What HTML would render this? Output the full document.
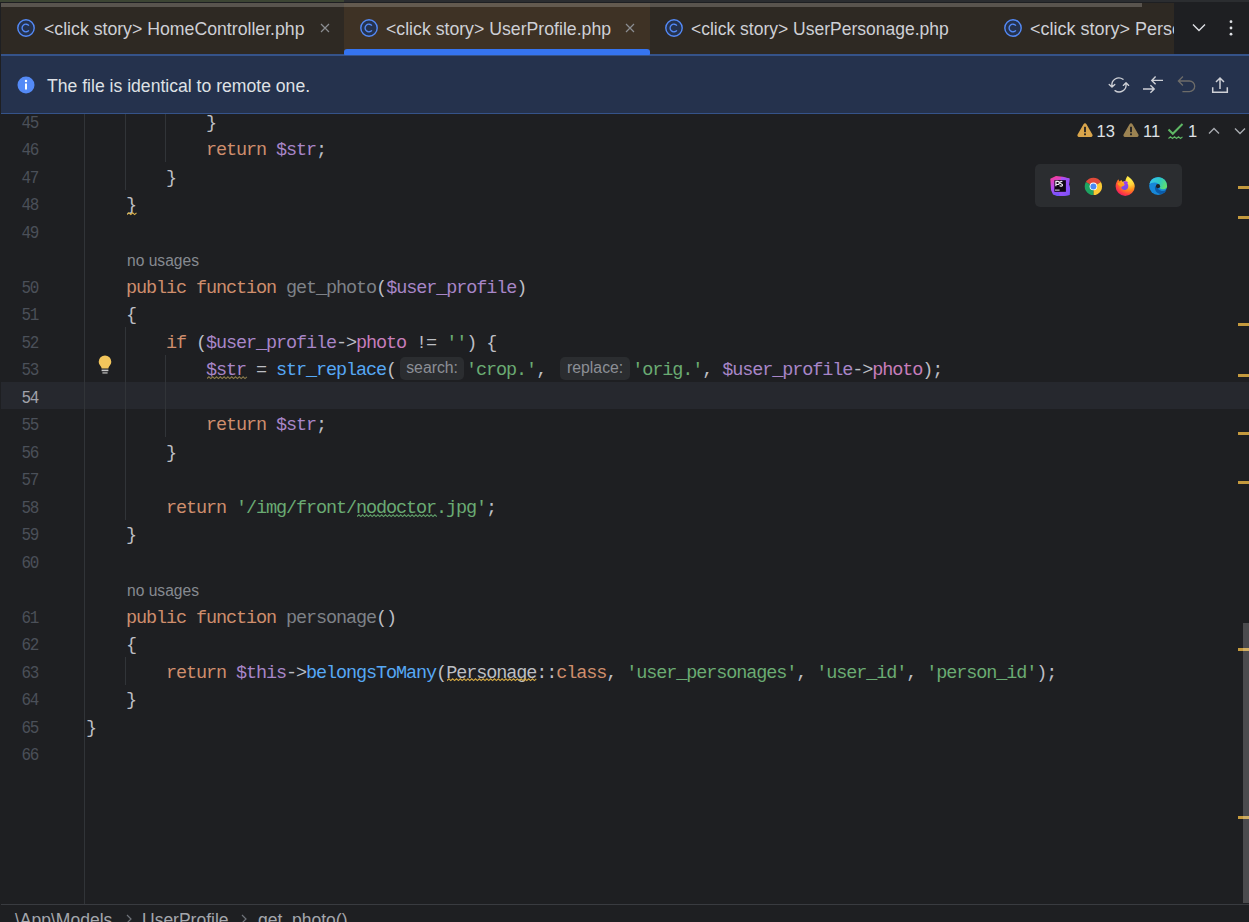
<!DOCTYPE html>
<html><head><meta charset="utf-8"><style>
*{margin:0;padding:0;box-sizing:border-box}
html,body{width:1249px;height:922px;overflow:hidden;background:#1e1f22;position:relative}
body{font-family:"Liberation Sans",sans-serif}
.abs{position:absolute}
/* top strip */
#strip1{left:0;top:0;width:344px;height:2px;background:#3c4433}
#strip2{left:344px;top:0;width:905px;height:2px;background:#2b2d30}
#tabbar{left:1px;top:3px;width:1173px;height:51px;background:#2e2923}
#tabright{left:1174px;top:3px;width:75px;height:51px;background:#1e1f22}
#acttab{left:344px;top:3px;width:306px;height:51px;background:#3e3225}
#thumbTop{left:1px;top:3px;width:1141px;height:4px;background:rgba(165,160,155,0.36)}
#actline{left:344px;top:49px;width:306px;height:6px;background:#3574f0;border-radius:3px 3px 1px 1px;z-index:2}
.tab{position:absolute;top:3px;height:51px;white-space:nowrap;overflow:hidden}
.tabtxt{position:absolute;top:18px;font-size:17.7px;line-height:22px;color:#ced0d6;white-space:pre}
.cicon{position:absolute;top:19px;width:18px;height:18px}
.close{position:absolute;top:23px;width:10px;height:10px}
/* banner */
#banner{left:1px;top:54px;width:1248px;height:60px;background:#25324d;border-top:2px solid #35538a;border-bottom:1px solid #35538a}
#bantxt{position:absolute;left:47px;top:75px;font-size:17.6px;line-height:22px;color:#dfe1e5;white-space:pre}
/* editor */
#editor{left:0;top:114px;width:1249px;height:790px;overflow:hidden;background:#1e1f22}
.curline{position:absolute;left:1px;width:1248px;height:27px;background:#26282e}
.ln{position:absolute;left:0;width:38px;text-align:right;font-family:"Liberation Mono",monospace;font-size:18.5px;letter-spacing:-1.5px;line-height:27.5px;color:#4b5059;padding-top:2.5px;transform:scaleX(0.86);transform-origin:right center}
.ln.cur{color:#a1a3ab}
.cl{position:absolute;left:86px;white-space:pre;font-family:"Liberation Mono",monospace;font-size:18.5px;letter-spacing:-1.1px;line-height:27.5px;color:#bcbec4;padding-top:2.5px}
.inl{position:absolute;left:127px;font-size:15.6px;line-height:27.5px;color:#868a91;padding-top:2px;white-space:pre}
.k{color:#cf8e6d}.d{color:#bcbec4}.v{color:#a886c8}.p{color:#c77dbb}.s{color:#6aab73}.f{color:#56a8f5}.u{color:#7f8288}
.dw{color:#bcbec4;text-decoration:underline wavy #b59a3a;text-decoration-thickness:1px;text-underline-offset:3px}
.vw{color:#a98bd8;text-decoration:underline wavy #b59a3a;text-decoration-thickness:1px;text-underline-offset:3px}
.sw{color:#6aab73;text-decoration:underline wavy #6f8c5a;text-decoration-thickness:1px;text-underline-offset:3px}
.dw2{color:#bcbec4;text-decoration:underline wavy #b59a3a;text-decoration-thickness:1px;text-underline-offset:3px}
.hint{display:inline-block;letter-spacing:0;vertical-align:top;margin-top:-0.5px;height:23px;line-height:22px;background:#2b2d30;border-radius:5px;font-family:"Liberation Sans",sans-serif;font-size:15.8px;color:#8c8f96;text-align:center}
.g{position:absolute;width:1px;background:#313438}
#gutline{left:84px;top:114px;width:1px;height:790px;background:#313438}
.mk{position:absolute;left:1238px;width:11px;height:3px;background:#c59a3e}
#sthumb{left:1243px;top:623px;width:6px;height:280px;background:rgba(255,255,255,0.2)}
/* status bar */
#crumbline{left:1px;top:904px;width:1248px;height:1px;background:#393b40}
.crumb{position:absolute;top:909px;font-size:17.5px;line-height:22px;color:#a4a6ac;white-space:pre}
#popup{left:1035px;top:164px;width:147px;height:43px;background:#2b2d30;border-radius:5px}
.wtxt{position:absolute;top:120px;font-size:16.5px;line-height:22px;color:#dfe1e5}
</style></head><body>
<div id="strip1" class="abs"></div>
<div id="strip2" class="abs"></div>
<div id="tabbar" class="abs"></div>
<div id="tabright" class="abs"></div>
<div id="acttab" class="abs"></div>
<div id="thumbTop" class="abs"></div>
<div id="actline" class="abs"></div>

<!-- tab 1 -->
<svg class="cicon" style="left:17px" viewBox="0 0 18 18"><circle cx="9" cy="9" r="8.2" fill="#25324d" stroke="#548af7" stroke-width="1.4"/><path d="M11.9 6.7 A3.8 3.8 0 1 0 11.9 11.3" fill="none" stroke="#548af7" stroke-width="1.35"/></svg>
<div class="tabtxt" style="left:44px">&lt;click story&gt; HomeController.php</div>
<svg class="close" style="left:320px" viewBox="0 0 10 10"><path d="M1 1L9 9M9 1L1 9" stroke="#8b8d91" stroke-width="1.2"/></svg>
<!-- tab 2 -->
<svg class="cicon" style="left:360px" viewBox="0 0 18 18"><circle cx="9" cy="9" r="8.2" fill="#25324d" stroke="#548af7" stroke-width="1.4"/><path d="M11.9 6.7 A3.8 3.8 0 1 0 11.9 11.3" fill="none" stroke="#548af7" stroke-width="1.35"/></svg>
<div class="tabtxt" style="left:386px">&lt;click story&gt; UserProfile.php</div>
<svg class="close" style="left:625px" viewBox="0 0 10 10"><path d="M1 1L9 9M9 1L1 9" stroke="#8b8d91" stroke-width="1.2"/></svg>
<!-- tab 3 -->
<svg class="cicon" style="left:664.5px" viewBox="0 0 18 18"><circle cx="9" cy="9" r="8.2" fill="#25324d" stroke="#548af7" stroke-width="1.4"/><path d="M11.9 6.7 A3.8 3.8 0 1 0 11.9 11.3" fill="none" stroke="#548af7" stroke-width="1.35"/></svg>
<div class="tabtxt" style="left:691px;font-size:17.5px">&lt;click story&gt; UserPersonage.php</div>
<!-- tab 4 -->
<svg class="cicon" style="left:1004px" viewBox="0 0 18 18"><circle cx="9" cy="9" r="8.2" fill="#25324d" stroke="#548af7" stroke-width="1.4"/><path d="M11.9 6.7 A3.8 3.8 0 1 0 11.9 11.3" fill="none" stroke="#548af7" stroke-width="1.35"/></svg>
<div class="abs" style="left:1020px;top:3px;width:154px;height:51px;overflow:hidden"><div class="tabtxt" style="left:10px;top:15px;font-size:18px">&lt;click story&gt; PersonageController.php</div></div>
<!-- tab bar right icons -->
<svg class="abs" style="left:1190px;top:20px" width="18" height="16" viewBox="0 0 18 16"><path d="M3 4.5L9 10.5L15 4.5" fill="none" stroke="#dfe1e5" stroke-width="1.4"/></svg>
<svg class="abs" style="left:1227px;top:17px" width="8" height="22" viewBox="0 0 8 22"><circle cx="4" cy="4.7" r="1.4" fill="#dfe1e5"/><circle cx="4" cy="11" r="1.4" fill="#dfe1e5"/><circle cx="4" cy="17.2" r="1.4" fill="#dfe1e5"/></svg>

<!-- banner -->
<div id="banner" class="abs"></div>
<svg class="abs" style="left:17px;top:76px" width="18" height="18" viewBox="0 0 18 18"><circle cx="9" cy="9" r="8.5" fill="#548af7"/><rect x="8" y="7.5" width="2" height="6" fill="#fff"/><circle cx="9" cy="5" r="1.2" fill="#fff"/></svg>
<div id="bantxt">The file is identical to remote one.</div>
<svg class="abs" style="left:1107px;top:73px" width="24" height="24" viewBox="0 0 24 24"><path d="M16 6.3A7 7 0 0 0 5 13.2M2.2 11.4L5 14.1L7.8 11.4" fill="none" stroke="#ced0d6" stroke-width="1.35" stroke-linecap="round" stroke-linejoin="round"/><path d="M8 17.6A7 7 0 0 0 19 10.8M16.3 12.4L19 9.8L21.7 12.4" fill="none" stroke="#ced0d6" stroke-width="1.35" stroke-linecap="round" stroke-linejoin="round"/></svg>
<svg class="abs" style="left:1141px;top:73px" width="24" height="24" viewBox="0 0 24 24"><path d="M11 7.4H22M14.6 3.6L10.8 7.4L14.6 11.2" fill="none" stroke="#ced0d6" stroke-width="1.4"/><path d="M2 16H13M9.4 12.2L13.2 16L9.4 19.8" fill="none" stroke="#ced0d6" stroke-width="1.4"/></svg>
<svg class="abs" style="left:1175px;top:73px" width="24" height="24" viewBox="0 0 24 24"><path d="M3.4 8H14.4A5.3 5.3 0 0 1 14.4 18.6H7.4M7.9 3.5L3.4 8L7.9 12.5" fill="none" stroke="#6d6c69" stroke-width="1.3"/></svg>
<svg class="abs" style="left:1208px;top:73px" width="24" height="24" viewBox="0 0 24 24"><path d="M12 5V16M8 9L12 5L16 9" fill="none" stroke="#ced0d6" stroke-width="1.5"/><path d="M4.7 14.2V19.3H19.3V14.2" fill="none" stroke="#ced0d6" stroke-width="1.5"/></svg>

<!-- editor -->
<div id="editor" class="abs">
<div style="position:absolute;left:0;top:-114px;width:1249px;height:922px">
<div class="curline" style="top:382.0px"></div>
<div class="g" style="left:125px;top:114px;height:75.5px"></div><div class="g" style="left:165px;top:114px;height:48.0px"></div><div class="g" style="left:125px;top:327.0px;height:192.5px"></div><div class="g" style="left:165px;top:354.5px;height:82.5px"></div><div class="g" style="left:125px;top:657.0px;height:27.5px"></div>
<div id="gutline" class="abs"></div>
<div class="ln" style="top:107.0px">45</div>
<div class="ln" style="top:134.5px">46</div>
<div class="ln" style="top:162.0px">47</div>
<div class="ln" style="top:189.5px">48</div>
<div class="ln" style="top:217.0px">49</div>
<div class="ln" style="top:272.0px">50</div>
<div class="ln" style="top:299.5px">51</div>
<div class="ln" style="top:327.0px">52</div>
<div class="ln" style="top:354.5px">53</div>
<div class="ln cur" style="top:382.0px">54</div>
<div class="ln" style="top:409.5px">55</div>
<div class="ln" style="top:437.0px">56</div>
<div class="ln" style="top:464.5px">57</div>
<div class="ln" style="top:492.0px">58</div>
<div class="ln" style="top:519.5px">59</div>
<div class="ln" style="top:547.0px">60</div>
<div class="ln" style="top:602.0px">61</div>
<div class="ln" style="top:629.5px">62</div>
<div class="ln" style="top:657.0px">63</div>
<div class="ln" style="top:684.5px">64</div>
<div class="ln" style="top:712.0px">65</div>
<div class="ln" style="top:739.5px">66</div>
<div class="cl" style="top:107.0px"><span class="d">            }</span></div>
<div class="cl" style="top:134.5px"><span class="d">            </span><span class="k">return</span><span class="d"> </span><span class="v">$str</span><span class="d">;</span></div>
<div class="cl" style="top:162.0px"><span class="d">        }</span></div>
<div class="cl" style="top:189.5px"><span class="d">    </span><span class="d">}</span></div>
<div class="cl" style="top:217.0px"></div>
<div class="inl" style="top:244.5px">no usages</div>
<div class="cl" style="top:272.0px"><span class="d">    </span><span class="k">public</span><span class="d"> </span><span class="k">function</span><span class="d"> </span><span class="u">get_photo</span><span class="d">(</span><span class="v">$user_profile</span><span class="d">)</span></div>
<div class="cl" style="top:299.5px"><span class="d">    {</span></div>
<div class="cl" style="top:327.0px"><span class="d">        </span><span class="k">if</span><span class="d"> (</span><span class="v">$user_profile</span><span class="d">-&gt;</span><span class="p">photo</span><span class="d"> != </span><span class="s">''</span><span class="d">) {</span></div>
<div class="cl" style="top:354.5px"><span class="d">            </span><span class="v">$str</span><span class="d"> = </span><span class="f">str_replace</span><span class="d">(</span><span class="hint" style="width:64px;margin-left:4px;margin-right:2px">search:</span><span class="s">'crop.'</span><span class="d">, </span><span class="hint" style="width:70px;margin-left:4px;margin-right:2px">replace:</span><span class="s">'orig.'</span><span class="d">, </span><span class="v">$user_profile</span><span class="d">-&gt;</span><span class="p">photo</span><span class="d">);</span></div>
<div class="cl" style="top:382.0px"></div>
<div class="cl" style="top:409.5px"><span class="d">            </span><span class="k">return</span><span class="d"> </span><span class="v">$str</span><span class="d">;</span></div>
<div class="cl" style="top:437.0px"><span class="d">        }</span></div>
<div class="cl" style="top:464.5px"></div>
<div class="cl" style="top:492.0px"><span class="d">        </span><span class="k">return</span><span class="d"> </span><span class="s">'/img/front/</span><span class="s">nodoctor</span><span class="s">.jpg'</span><span class="d">;</span></div>
<div class="cl" style="top:519.5px"><span class="d">    }</span></div>
<div class="cl" style="top:547.0px"></div>
<div class="inl" style="top:574.5px">no usages</div>
<div class="cl" style="top:602.0px"><span class="d">    </span><span class="k">public</span><span class="d"> </span><span class="k">function</span><span class="d"> </span><span class="u">personage</span><span class="d">()</span></div>
<div class="cl" style="top:629.5px"><span class="d">    {</span></div>
<div class="cl" style="top:657.0px"><span class="d">        </span><span class="k">return</span><span class="d"> </span><span class="v">$this</span><span class="d">-&gt;</span><span class="f">belongsToMany</span><span class="d">(</span><span class="d">Personage</span><span class="d">::</span><span class="k">class</span><span class="d">, </span><span class="s">'user_personages'</span><span class="d">, </span><span class="s">'user_id'</span><span class="d">, </span><span class="s">'person_id'</span><span class="d">);</span></div>
<div class="cl" style="top:684.5px"><span class="d">    }</span></div>
<div class="cl" style="top:712.0px"><span class="d">}</span></div>
<div class="cl" style="top:739.5px"></div>
<!-- lightbulb -->
<svg class="abs" style="left:96px;top:354px" width="18" height="22" viewBox="0 0 18 22"><path d="M9 1.5A6.3 6.3 0 0 0 2.7 7.8C2.7 10.3 4.4 11.6 5.3 13.2L5.6 14.6H12.4L12.7 13.2C13.6 11.6 15.3 10.3 15.3 7.8A6.3 6.3 0 0 0 9 1.5Z" fill="#f2c55c"/><rect x="5.6" y="15.6" width="6.8" height="1.6" fill="#c9c9c9"/><rect x="6.4" y="18.1" width="5.2" height="1.6" fill="#9a9a9a"/></svg>
<!-- warnings -->
<svg class="abs" style="left:1076px;top:122px" width="18" height="16" viewBox="0 0 18 16"><path d="M9 1.2C8.3 1.2 7.9 1.6 7.5 2.3L1.6 12.6C1 13.7 1.6 15 2.9 15H15.1C16.4 15 17 13.7 16.4 12.6L10.5 2.3C10.1 1.6 9.7 1.2 9 1.2Z" fill="#d9a54b"/><rect x="8.1" y="4.8" width="1.8" height="5.4" fill="#1e1f22"/><rect x="8.1" y="11.4" width="1.8" height="1.8" fill="#1e1f22"/></svg>
<div class="wtxt" style="left:1096.5px">13</div>
<svg class="abs" style="left:1122px;top:122px" width="18" height="16" viewBox="0 0 18 16"><path d="M9 1.2C8.3 1.2 7.9 1.6 7.5 2.3L1.6 12.6C1 13.7 1.6 15 2.9 15H15.1C16.4 15 17 13.7 16.4 12.6L10.5 2.3C10.1 1.6 9.7 1.2 9 1.2Z" fill="#9c8352"/><rect x="8.1" y="4.8" width="1.8" height="5.4" fill="#1e1f22"/><rect x="8.1" y="11.4" width="1.8" height="1.8" fill="#1e1f22"/></svg>
<div class="wtxt" style="left:1143px">11</div>
<svg class="abs" style="left:1166px;top:121px" width="19" height="20" viewBox="0 0 19 20"><path d="M2.5 8.5L6.8 12.8L16.5 3" fill="none" stroke="#5fb865" stroke-width="2"/><path d="M2.5 17.5L4.5 15.8L6.5 17.5L8.5 15.8L10.5 17.5L12.5 15.8L14.5 17.5L16.5 15.8" fill="none" stroke="#5fb865" stroke-width="1.1"/></svg>
<div class="wtxt" style="left:1188px">1</div>
<svg class="abs" style="left:1207px;top:124px" width="14" height="12" viewBox="0 0 14 12"><path d="M2 9.5L7 4.5L12 9.5" fill="none" stroke="#a8abb0" stroke-width="1.4"/></svg>
<svg class="abs" style="left:1233px;top:124px" width="14" height="12" viewBox="0 0 14 12"><path d="M2 4.5L7 9.5L12 4.5" fill="none" stroke="#a8abb0" stroke-width="1.4"/></svg>
<!-- popup -->
<div id="popup" class="abs"></div>
<!-- PS -->
<svg class="abs" style="left:1050px;top:176px" width="20" height="20" viewBox="0 0 20 20"><defs><linearGradient id="psg" x1="0" y1="0" x2="0.35" y2="1"><stop offset="0" stop-color="#ff3a90"/><stop offset="0.55" stop-color="#b64cf0"/><stop offset="1" stop-color="#6c55ff"/></linearGradient><linearGradient id="psg2" x1="0" y1="0" x2="1" y2="1"><stop offset="0" stop-color="#b24df6"/><stop offset="1" stop-color="#7a52fa"/></linearGradient></defs><path d="M0.3 2.8L6 0L13 0.8L19.5 2.5L19 8.5L20 13L19.5 19L13.5 20L7 20L3 18.5L1 14Z" fill="url(#psg)"/><path d="M11 1L19.5 2.5L19 8.5L20 13L19.5 19L13.5 20L9 19.5Z" fill="url(#psg2)"/><rect x="4.4" y="4.2" width="11.5" height="11.6" fill="#0d0612"/><path d="M5.9 10.2V5.4H7.8A1.55 1.55 0 0 1 7.8 8.5H5.9" fill="none" stroke="#f4eef8" stroke-width="1.2"/><path d="M12.3 5.9C11.7 5.3 9.8 5.2 9.8 6.6C9.8 7.9 12.5 7.5 12.5 9C12.5 10.4 10.4 10.5 9.6 9.7" fill="none" stroke="#f4eef8" stroke-width="1.2"/><rect x="5" y="13.6" width="4.6" height="1" fill="#e8e0ee"/></svg>
<!-- Chrome -->
<svg class="abs" style="left:1084px;top:177px" width="19" height="19" viewBox="0 0 19 19"><path d="M9.4 9.4L1.87 5.05A8.7 8.7 0 0 1 16.93 5.05Z" fill="#e04a3a"/><path d="M9.4 9.4L16.93 5.05A8.7 8.7 0 0 1 9.4 18.1Z" fill="#fcc934"/><path d="M9.4 9.4L9.4 18.1A8.7 8.7 0 0 1 1.87 5.05Z" fill="#1ea362"/><circle cx="9.4" cy="9.4" r="3.8" fill="#fff"/><circle cx="9.4" cy="9.4" r="3" fill="#4a8af4"/></svg>
<!-- Firefox -->
<svg class="abs" style="left:1113px;top:173px" width="24" height="24" viewBox="0 0 24 24"><defs><radialGradient id="ffg" cx="0.72" cy="0.18" r="0.95"><stop offset="0" stop-color="#fff44f"/><stop offset="0.3" stop-color="#ffd23a"/><stop offset="0.55" stop-color="#ff8a1a"/><stop offset="0.78" stop-color="#ff4040"/><stop offset="1" stop-color="#e8106e"/></radialGradient><linearGradient id="ffp" x1="0" y1="0" x2="0" y2="1"><stop offset="0" stop-color="#a73cf0"/><stop offset="1" stop-color="#6a4ee8"/></linearGradient></defs><path d="M14.6 3C17 5 21.8 8.5 21.8 13.3A9.6 9.6 0 0 1 2.6 13.3C2.6 10.5 3.8 8 5.3 6.2L6.5 8.4L8.3 7.1L9.8 8.9C10.5 8.2 11.5 7.9 12.4 8C12.8 6 13.5 4.2 14.6 3Z" fill="url(#ffg)"/><path d="M10.5 8.4C12.5 7.8 14.5 8.3 15 9.5C14.2 10 14.2 10.5 14.8 11C15.8 12.5 15.5 15.8 13 16.7C10.8 17.4 8.5 16.3 8.2 14.2C9.5 13.5 11 12.8 11.6 11.8C11 10.5 10.5 9.5 10.5 8.4Z" fill="url(#ffp)"/><path d="M4.2 10.2C6.5 9.6 9.5 10.2 11.8 11.6C10.3 12.3 9 12.8 8.3 13.6C6.8 13.2 5.2 12.2 4.2 10.2Z" fill="#ff9e1a"/></svg>
<!-- Edge -->
<svg class="abs" style="left:1146px;top:174px" width="24" height="24" viewBox="0 0 24 24"><defs><linearGradient id="edg2" x1="0" y1="0.3" x2="1" y2="0.6"><stop offset="0" stop-color="#38c4f0"/><stop offset="0.55" stop-color="#2ec8c0"/><stop offset="1" stop-color="#62e26a"/></linearGradient></defs><circle cx="12.1" cy="11.9" r="9" fill="#1787d8"/><path d="M9 12.5C8.3 16.8 11.5 20.8 16.3 19.8C18.3 19.3 19.7 18 20.3 16.6C17.2 17.6 13.2 17.2 11.6 14Z" fill="#0b5aa8"/><path d="M3.3 10.3A9 9 0 0 1 21.1 12.5C20.8 14.6 18.6 15.6 16.2 15.3C14.2 15 13.3 13.6 13.9 12.2C13.5 9.8 11 8.4 8.5 8.5C6 8.6 4.1 9.4 3.3 10.3Z" fill="url(#edg2)"/><circle cx="12" cy="12.2" r="2.1" fill="#1f2124"/></svg>
<div class="mk" style="top:185.8px"></div><div class="mk" style="top:215.5px"></div><div class="mk" style="top:323px"></div><div class="mk" style="top:373.5px"></div><div class="mk" style="top:432px"></div><div class="mk" style="top:480.7px"></div><div class="mk" style="top:648px"></div><div class="mk" style="top:816px"></div><svg class="abs" style="left:127px;top:211.5px;opacity:1.0" width="11" height="4" viewBox="0 0 11 4"><polyline points="0.00,2.60 1.90,0.80 3.80,2.60 5.70,0.80 7.60,2.60 9.50,0.80" fill="none" stroke="#dcb24a" stroke-width="1.1"/></svg><svg class="abs" style="left:207px;top:376.3px;opacity:1.0" width="41" height="4" viewBox="0 0 41 4"><polyline points="0.00,2.60 1.90,0.80 3.80,2.60 5.70,0.80 7.60,2.60 9.50,0.80 11.40,2.60 13.30,0.80 15.20,2.60 17.10,0.80 19.00,2.60 20.90,0.80 22.80,2.60 24.70,0.80 26.60,2.60 28.50,0.80 30.40,2.60 32.30,0.80 34.20,2.60 36.10,0.80 38.00,2.60 39.90,0.80" fill="none" stroke="#8c7c4c" stroke-width="1.1"/></svg><svg class="abs" style="left:357px;top:513.6999999999999px;opacity:1.0" width="81" height="4" viewBox="0 0 81 4"><polyline points="0.00,2.60 1.90,0.80 3.80,2.60 5.70,0.80 7.60,2.60 9.50,0.80 11.40,2.60 13.30,0.80 15.20,2.60 17.10,0.80 19.00,2.60 20.90,0.80 22.80,2.60 24.70,0.80 26.60,2.60 28.50,0.80 30.40,2.60 32.30,0.80 34.20,2.60 36.10,0.80 38.00,2.60 39.90,0.80 41.80,2.60 43.70,0.80 45.60,2.60 47.50,0.80 49.40,2.60 51.30,0.80 53.20,2.60 55.10,0.80 57.00,2.60 58.90,0.80 60.80,2.60 62.70,0.80 64.60,2.60 66.50,0.80 68.40,2.60 70.30,0.80 72.20,2.60 74.10,0.80 76.00,2.60 77.90,0.80 79.80,2.60" fill="none" stroke="#62a06b" stroke-width="1.1"/></svg><svg class="abs" style="left:447px;top:678.3px;opacity:1.0" width="91" height="4" viewBox="0 0 91 4"><polyline points="0.00,2.60 1.90,0.80 3.80,2.60 5.70,0.80 7.60,2.60 9.50,0.80 11.40,2.60 13.30,0.80 15.20,2.60 17.10,0.80 19.00,2.60 20.90,0.80 22.80,2.60 24.70,0.80 26.60,2.60 28.50,0.80 30.40,2.60 32.30,0.80 34.20,2.60 36.10,0.80 38.00,2.60 39.90,0.80 41.80,2.60 43.70,0.80 45.60,2.60 47.50,0.80 49.40,2.60 51.30,0.80 53.20,2.60 55.10,0.80 57.00,2.60 58.90,0.80 60.80,2.60 62.70,0.80 64.60,2.60 66.50,0.80 68.40,2.60 70.30,0.80 72.20,2.60 74.10,0.80 76.00,2.60 77.90,0.80 79.80,2.60 81.70,0.80 83.60,2.60 85.50,0.80 87.40,2.60 89.30,0.80" fill="none" stroke="#d8ac45" stroke-width="1.1"/></svg>
<div id="sthumb" class="abs"></div>
</div>
</div>

<!-- breadcrumbs -->
<div id="crumbline" class="abs"></div>
<div class="crumb" style="left:15px">\App\Models</div>
<svg class="abs" style="left:124px;top:913px" width="10" height="12" viewBox="0 0 10 12"><path d="M3 2L7 6L3 10" fill="none" stroke="#6f737a" stroke-width="1.2"/></svg>
<div class="crumb" style="left:142px">UserProfile</div>
<svg class="abs" style="left:239px;top:913px" width="10" height="12" viewBox="0 0 10 12"><path d="M3 2L7 6L3 10" fill="none" stroke="#6f737a" stroke-width="1.2"/></svg>
<div class="crumb" style="left:258px">get_photo()</div>
</body></html>
